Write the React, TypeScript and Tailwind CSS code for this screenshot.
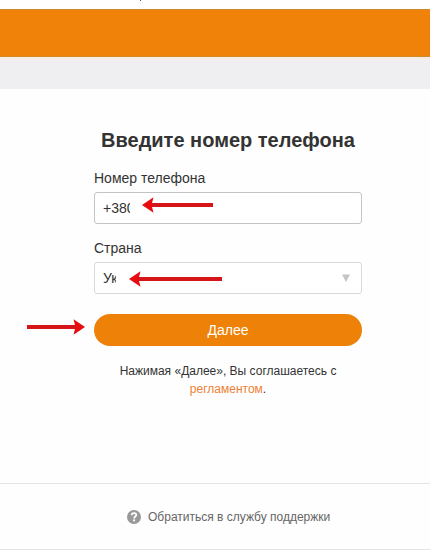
import clsx from "clsx"

// Red pointer arrow, tip on the left unless flipped
function Arrow({ length, className }: { length: number; className?: string }) {
  return (
    <svg
      width={length}
      height={16}
      viewBox={`0 0 ${length} 16`}
      className={clsx("absolute", className)}
      aria-hidden="true"
    >
      <path d={`M8 6H${length}V10H8Z`} fill="#d51518" />
      <path d="M0 8L11.5 0.3L9.5 8L11.5 15.7Z" fill="#e80c10" />
    </svg>
  )
}

function HelpIcon() {
  return (
    <svg width={14} height={14} viewBox="0 0 14 14" aria-hidden="true">
      <circle cx={7} cy={7} r={7} fill="#999999" />
      <path
        d="M4.7 5.3C4.7 3.8 5.7 3.1 7 3.1C8.4 3.1 9.3 3.9 9.3 5C9.3 6.5 7.1 6.5 7.1 8.4"
        fill="none"
        stroke="#ffffff"
        strokeWidth={1.8}
      />
      <rect x={6.1} y={9.4} width={2} height={1.9} fill="#ffffff" />
    </svg>
  )
}

export default function App() {
  return (
    <div className="flex h-[550px] w-[430px] flex-col overflow-hidden bg-[#fefefe] font-['Liberation_Sans',Arial,sans-serif] text-[#333333]">
      {/* Header Section */}
      <div className="relative h-[9px] shrink-0 bg-white">
        <span className="absolute left-[140px] top-0 h-px w-px bg-[#555555]" />
      </div>
      <header className="h-12 shrink-0 border-y border-[#cf8a2c] bg-[#f08209]" />
      <div className="h-8 shrink-0 border-t-2 border-[#fcebe0] bg-[#efeff1]" />

      {/* Main Content */}
      <main className="ml-[94px] flex h-[394px] w-[268px] shrink-0 flex-col pt-[39px]">
        <h1 className="self-center whitespace-nowrap text-[20px] font-bold leading-6">
          Введите номер телефона
        </h1>

        <label className="mt-4 text-[14px] leading-5">Номер телефона</label>
        <div className="relative mt-1 flex h-8 items-center rounded-[3px] border border-[#c3c3c3] bg-white px-2 text-[14px]">
          <span className="w-[27px] overflow-hidden whitespace-nowrap">+380</span>
          <Arrow length={71} className="left-[47px] top-[4px]" />
        </div>

        <label className="mt-[14px] text-[14px] leading-5">Страна</label>
        <div className="relative mt-1 flex h-8 items-center justify-between rounded-[3px] border border-[#d9d9d9] bg-white pl-2 pr-[11px] text-[14px]">
          <span className="w-[13px] overflow-hidden whitespace-nowrap">Ук</span>
          <svg width={8} height={8} viewBox="0 0 8 8" aria-hidden="true">
            <path d="M0 0.5H8L4 8Z" fill="#c4c4c4" />
          </svg>
          <Arrow length={93} className="left-[34px] top-2" />
        </div>

        <button className="relative mt-5 h-8 shrink-0 rounded-full bg-[#ee8208] text-[14px] text-white">
          Далее
          <Arrow length={58} className="-left-[67px] top-[5px] -scale-x-100" />
        </button>

        <p className="mt-4 whitespace-nowrap text-center text-[12px] leading-[18px]">
          Нажимая «Далее», Вы соглашаетесь с
          <br />
          <a className="text-[#ee8133]">регламентом</a>.
        </p>
      </main>

      {/* Footer Section */}
      <footer className="flex h-[67px] shrink-0 items-center border-y border-[#e4e4e4] pl-[127px] text-[12px] text-[#666666]">
        <HelpIcon />
        <span className="ml-[7px]">Обратиться в службу поддержки</span>
      </footer>
    </div>
  )
}
